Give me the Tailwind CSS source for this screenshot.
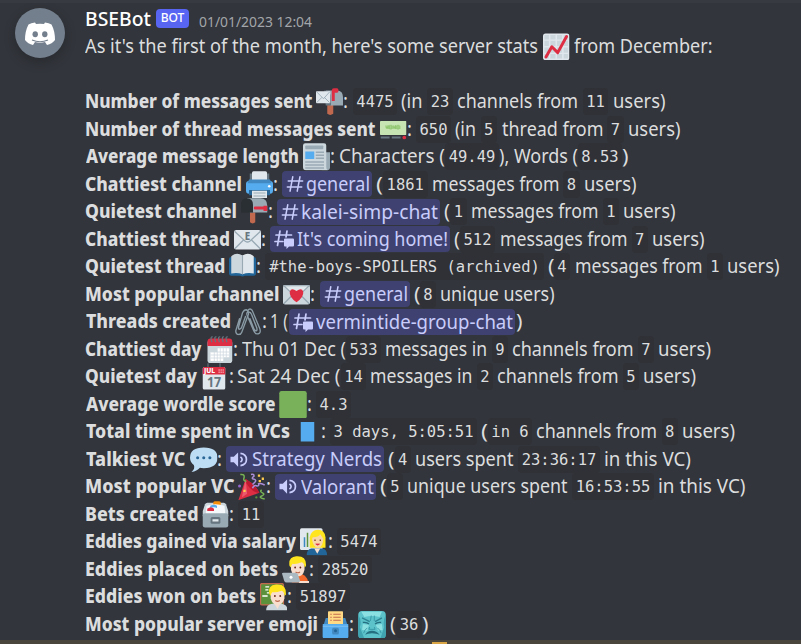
<!DOCTYPE html>
<html lang="en">
<head>
<meta charset="utf-8">
<title>BSEBot</title>
<script src="https://cdn.jsdelivr.net/npm/@tailwindcss/browser@4"></script>
</head>
<body class="bg-[#32353b]">
<svg class="hidden">
<symbol id="chart" viewBox="0 0 36 36"><rect width="36" height="36" rx="3.5" fill="#e1e8ed"/><path d="M2 2h6v6H2zM10 2h7v6h-7zM19 2h7v6h-7zM28 2h6v6h-6zM2 10h6v7H2zM10 10h7v7h-7zM19 10h7v7h-7zM28 10h6v7h-6zM2 19h6v7H2zM10 19h7v7h-7zM19 19h7v7h-7zM28 19h6v7h-6zM2 28h6v6H2zM10 28h7v6h-7zM19 28h7v6h-7zM28 28h6v6h-6z" fill="#ccd6dd"/><path d="M4 32l8-14 8 8L32 4" fill="none" stroke="#dd2e44" stroke-width="4" stroke-linecap="round" stroke-linejoin="round"/></symbol>
<symbol id="mailbox" viewBox="0 0 36 36"><path d="M15 22h8v12q-4 3-8 0z" fill="#c1694f"/><path d="M13 3h15q8 0 8 9v11H19z" fill="#99aab5"/><path d="M11 3q9 0 9 10v10h-7z" fill="#66757f"/><rect x="0" y="4" width="19" height="16" rx="1" fill="#e1e8ed"/><path d="M1 5l9 9 8-9M1 19l7-7M18 19l-7-7" fill="none" stroke="#99aab5" stroke-width="1.2"/><path d="M21 17V3q0-3 3-3h4q2 0 2 3t-2 3h-3v11z" fill="#dd2e44"/></symbol>
<symbol id="pager" viewBox="0 0 36 36"><rect y="6" width="36" height="19" rx="1" fill="#c6e5b3"/><path d="M8 12.500h20v4.500H8z" fill="#a6d388"/><path d="M8 12v3h3v-3v5M13 12h3v5h-3zM18 12v3h3v-3v5M23 12h3v5h-3z" fill="none" stroke="#8cc56c"/><path d="M1 27h12v3H1zM16 27h12v3H16z" fill="#66757f"/><circle cx="33" cy="28.500" r="2.500" fill="#dd2e44"/></symbol>
<symbol id="news" viewBox="0 0 36 36"><path d="M30 12h6v20q0 4-4 4h-7z" fill="#99aab5"/><path d="M0 3q0-3 3-3h25q3 0 3 3v28q0 5 3 5H4q-4 0-4-4z" fill="#ccd6dd"/><rect x="3" y="3" width="24" height="5" rx="1" fill="#99aab5"/><rect x="3" y="11" width="12" height="10" fill="#55acee"/><path d="M17 12h11M17 16h11M17 20h11M3 25h25M3 29h25M3 33h25" stroke="#99aab5" stroke-width="2"/></symbol>
<symbol id="printer" viewBox="0 0 36 36"><path d="M5 3h26v14H5z" fill="#66757f"/><path d="M8 2q0-2 2-2h16q2 0 2 2v14H8z" fill="#e1e8ed"/><rect y="13" width="36" height="17" rx="4" fill="#55acee"/><path d="M4 11h28l2 5H2z" fill="#4289c1"/><path d="M4 25h28v7H4z" fill="#2a6797"/><path d="M8 26h20v10H8z" fill="#e1e8ed"/><path d="M10 29h16M10 33h16" stroke="#99aab5" stroke-width="1.500"/><circle cx="31" cy="20" r="1.700" fill="#fff"/></symbol>
<symbol id="mailclosed" viewBox="0 0 36 36"><path d="M12 19h7v13q-3.500 3-7 0z" fill="#c1694f"/><path d="M8 0h18q9 0 9 10v9H12z" fill="#99aab5"/><path d="M0 19V9q0-9 8-9t8 9v10z" fill="#292f33"/><path d="M18 11h12v-1h4q1 0 1 1v6h-5v-2H18q-2-2 0-4z" fill="#dd2e44"/></symbol>
<symbol id="mail" viewBox="0 0 36 36"><rect y="5" width="36" height="26" rx="3" fill="#ccd6dd"/><path d="M1 30l13-13M35 30L22 17" stroke="#99aab5" stroke-width="1.800"/><path d="M1 6h34L20 20q-2 2-4 0z" fill="#e1e8ed" stroke="#99aab5" stroke-width="1.500"/></symbol>
<symbol id="maile" viewBox="0 0 36 36"><rect y="5" width="36" height="26" rx="3" fill="#e1e8ed"/><path d="M1 30l12-12M35 30L23 18M1 7l14 13q3 2 6 0L35 7" fill="none" stroke="#99aab5" stroke-width="1.800"/><text x="18" y="18" text-anchor="middle" font-family="Noto Sans" font-weight="800" font-size="13" fill="#66757f">E</text></symbol>
<symbol id="book" viewBox="0 0 36 36"><path d="M0 8q0-3 3-3h30q3 0 3 3v19q0 3-3 3H21q-3 2-6 0H3q-3 0-3-3z" fill="#226699"/><path d="M3 4q7-6 15-1v25q-7-3-15-1z" fill="#ccd6dd"/><path d="M33 4q-7-6-15-1v25q7-3 15-1z" fill="#e1e8ed"/><path d="M18 3v25" stroke="#99aab5" stroke-width="1.500"/></symbol>
<symbol id="love" viewBox="0 0 36 36"><use href="#mail"/><path d="M18 28Q8 21 9 14q2-6 9-1 7-5 9 1 1 7-9 14z" fill="#dd2e44"/></symbol>
<symbol id="clips" viewBox="0 0 36 36"><g fill="none" stroke="#8a9ba6" stroke-width="1.800" stroke-linecap="round"><path d="M6 14L1 30q0 5 4 5 3 0 4-3l9-24q0-5-3-6-3 0-5 4L5 24q-1 4 1 4t3-3l5-14"/><path d="M17 3q3-4 6 0l10 24q2 6-2 7-4 1-6-4L16 9q-1-4 2-4t4 3l7 18q1 4-1 4t-3-3l-5-13"/></g></symbol>
<symbol id="spiral" viewBox="0 0 36 36"><rect x="2" y="5" width="33" height="31" rx="4" fill="#ccd6dd"/><path d="M2 13V7q0-4 4-4h25q4 0 4 4v6z" fill="#dd2e44"/><path d="M15 16h16v12h-8v5H6V21h9z" fill="#fff"/><path d="M6 25h25M6 21h25M6 29h17M11 20v13M15 16v17M19 16v17M23 16v12M27 16v12" stroke="#ccd6dd"/><path d="M8 8q-3-8 1-7M13 8q-3-8 1-7M18 8q-3-8 1-7M23 8q-3-8 1-7M28 8q-3-8 1-7" fill="none" stroke="#66757f" stroke-width="1.600"/></symbol>
<symbol id="jul" viewBox="0 0 36 36"><path d="M8 0v8M24 0v8" stroke="#66757f" stroke-width="1.500"/><rect x="1" y="5" width="30" height="30" rx="2" fill="#e1e8ed"/><path d="M1 15V7q0-2 2-2h26q2 0 2 2v8z" fill="#dd2e44"/><text x="2.500" y="13.500" font-family="Noto Sans" font-weight="800" font-size="9" fill="#fff">JUL</text><path d="M22 9h8M22 12h8" stroke="#f5a0ab" stroke-width="1.700" stroke-dasharray="1.700 1"/><text x="16" y="32" text-anchor="middle" font-family="Noto Sans" font-weight="700" font-size="20" textLength="19" lengthAdjust="spacingAndGlyphs" fill="#66757f">17</text></symbol>
<symbol id="green" viewBox="0 0 36 36"><rect width="36" height="36" rx="3" fill="#78b159"/></symbol>
<symbol id="blue" viewBox="0 0 36 36"><path d="M9 5h18v26H9z" fill="#55acee"/></symbol>
<symbol id="speech" viewBox="0 0 36 36"><path d="M18 2q18 0 18 13.500T18 29q-3 0-5-.5Q9 33 2 34q5-4 3-9-5-4-5-9.500Q0 2 18 2z" fill="#bdddf4"/><circle cx="10" cy="15.500" r="2" fill="#2a6797"/><circle cx="18" cy="15.500" r="2" fill="#2a6797"/><circle cx="26" cy="15.500" r="2" fill="#2a6797"/></symbol>
<symbol id="party" viewBox="0 0 36 36"><path d="M10 8q14 8 18 18L2 35q-2 1-1-1z" fill="#dd2e44"/><path d="M10 8L5 32l7-5z" fill="#ea596e"/><path d="M10 8q14 8 18 18-7 0-13-7T10 8z" fill="#be1931"/><path d="M3 2q6-1 5 4-2 4 3 5" fill="none" stroke="#77b255" stroke-width="2"/><path d="M17 2q4-1 4 2-4 3-1 4 5 1 2 4l-3 3M19 20q2-5 6-3 3 0 2-3 4-1 8 2" fill="none" stroke="#aa8dd8" stroke-width="2"/><path d="M31 22q-3 2 1 4t-1 4 4 4" fill="none" stroke="#77b255" stroke-width="2"/><path d="M26 2h3v3h-3zM31 6h3v3h-3zM27 9h3v3h-3zM7 22h3v3H7z" fill="#ffcc4d"/><circle cx="2" cy="17" r="2" fill="#9266cc"/><circle cx="24" cy="32" r="1.500" fill="#5c913b"/></symbol>
<symbol id="filebox" viewBox="0 0 36 36"><path d="M1 20V13L4 4q1-2 3-2h22q2 0 3 2l3 9v7z" fill="#ccd6dd"/><path d="M15 2q0-2 2-2h6q2 0 2 2v3H15z" fill="#f4900c"/><path d="M6 6q12-4 24 0l1 11H5z" fill="#f5f8fa"/><path d="M11 6q5-3 9 0v3q-4-2-9 0z" fill="#55acee"/><path d="M7 10q5-4 9 0v3H7z" fill="#dd2e44"/><rect x="1" y="16" width="34" height="19" rx="3" fill="#99aab5"/><rect x="11.500" y="21" width="13" height="9" rx="2" fill="#66757f"/><path d="M14 24h8v3h-8z" fill="#e1e8ed"/></symbol>
<symbol id="face" viewBox="0 0 36 36"><path d="M14 10q0-9 9-9t9 9v8q-2 9-9 9t-9-9z" fill="#f7dece"/><circle cx="19.500" cy="15" r="1.200" fill="#662113"/><circle cx="26.500" cy="15" r="1.200" fill="#662113"/><path d="M20 21q3 2 6 0" fill="none" stroke="#c1694f" stroke-width="1.500"/></symbol>
<symbol id="office" viewBox="0 0 36 36"><rect width="30" height="29" rx="2" fill="#e1e8ed"/><path d="M6 12v13" stroke="#3b88c3" stroke-width="2"/><path d="M10 6v19" stroke="#5c913b" stroke-width="2"/><path d="M13 12Q15 2 24 2t10 10v14H13z" fill="#ffe51e"/><path d="M9 36q0-8 6-9h15q6 1 6 9z" fill="#226699"/><path d="M19 27h8l-4 7z" fill="#f7dece"/><path d="M17 12q8 0 10-4l4 6q0 11-7 12-7-1-8-12z" fill="#f7d7a8"/><path d="M20 15v2M27 15v2" stroke="#662113" stroke-width="1.500"/><path d="M21 21q3 3 5 0z" fill="#dd2e44" stroke="#dd2e44"/></symbol>
<symbol id="tech" viewBox="0 0 36 36"><path d="M13 32q1-9 8-9 12 0 14 12H13z" fill="#f4692b"/><use href="#face" x="-2"/><path d="M10 13Q8 1 19 0q14-1 13 13l-2 2q0-6-4-7-7 3-12 2-2 2-2 5z" fill="#ffe51e"/><path d="M0 23q0-1 2-1h16q2 0 3 2l4 11H6q-2 0-3-2z" fill="#aab8c2"/><circle cx="12" cy="28" r="2" fill="#fff"/><path d="M24 33h12v3H22z" fill="#f7dece"/></symbol>
<symbol id="teach" viewBox="0 0 36 36"><rect x=".7" y=".7" width="30" height="28" rx="2" fill="#5c913b" stroke="#c1694f" stroke-width="1.600"/><path d="M7 5h5M7 9h4M9 13h3M3 17h7" stroke="#fff" stroke-width="1.800"/><path d="M8 36q0-8 8-9h12q8 1 8 9z" fill="#ccd6dd"/><path d="M18 26h9l-4 8z" fill="#f7dece"/><use href="#face" x="0" y="2"/><path d="M12 14Q10 3 21 2q14-1 13 13l-2 2q0-6-4-7-7 3-12 2-2 2-2 5z" fill="#ffe51e"/></symbol>
<symbol id="ballot" viewBox="0 0 36 36"><path d="M5 9h26l4 13v12q0 2-2 2H3q-2 0-2-2V22z" fill="#4289c1"/><path d="M8 1q0-1 1-1h18q1 0 1 1v16H8z" fill="#ffd983"/><path d="M11 4h2M15 4h10M11 8h2M15 8h10M11 12h2M15 12h10" stroke="#c1694f" stroke-width="1.500"/><path d="M1 17h34v17q0 2-2 2H3q-2 0-2-2z" fill="#55acee"/><path d="M1 20h34" stroke="#8cc8f4"/><rect x="13.500" y="22" width="9" height="9" rx="2" fill="#4289c1"/><circle cx="18" cy="26" r="2" fill="#226699"/></symbol>
<symbol id="cyan" viewBox="0 0 36 36"><rect width="36" height="36" rx="5" fill="#5cc3cb"/><path d="M4 1h27l-3 7q-10-3-20 0zM6 17l8 1-2 8-7-1zM31 17l-8 1 3 8 6-1z" fill="#8be0e2"/><path d="M0 5q5 8 2 16l6 15H5q-5 0-5-5zM36 5q-4 8-2 16l-5 15h2q5 0 5-5z" fill="#3fa3b0"/><path d="M5 9l10 5M31 9l-9 5" stroke="#2d8594" stroke-width="1.800"/><path d="M6 15q5-1 8 2M30 15q-5-1-8 2" fill="none" stroke="#246f80" stroke-width="1.600"/><path d="M17 6l-1 7M21 6v7M15 21l-1 3h8l-1-3M12 22q-4 3-5 7M25 22q4 3 5 7" fill="none" stroke="#3797a5" stroke-width="1.200"/><path d="M9 31q3-5 9-5t10 5q-4-2-10-2t-9 2z" fill="#246f80"/></symbol>
<symbol id="i-hash" viewBox="0 0 20 20"><path d="M7.500 2L4.500 18M15.500 2L12.500 18M2.500 6.700h16M1.500 13.300h16" fill="none" stroke="#c9cdfb" stroke-width="1.700" stroke-linecap="round"/></symbol>
<symbol id="i-thread" viewBox="0 0 20 20"><path d="M6 2L3.500 16.500M13 2l-1 6M2 6h15.500M1 12.500h8" fill="none" stroke="#c9cdfb" stroke-width="1.700" stroke-linecap="round"/><path d="M11 9.500h8q1 0 1 1v6q0 1-1 1h-4L12.500 20v-2.500H11q-1 0-1-1v-6q0-1 1-1z" fill="#c9cdfb"/></symbol>
<symbol id="i-voice" viewBox="0 0 20 20"><path d="M8.500 2.500v15L4 13H.5V7H4z" fill="#c9cdfb"/><path d="M11 7.300q3.500 2.700 0 5.400M11 3.600q6.300.9 6.300 6.400T11 16.400" fill="none" stroke="#c9cdfb" stroke-width="1.800"/></symbol>
</svg>
<main class="relative flex h-[644px] w-[801px] flex-col overflow-hidden bg-[#32353b] font-['Noto_Sans',sans-serif] text-[#dcddde]">
  <div class="h-[3px] shrink-0 bg-[#373a41]"></div>
  <div class="flex h-[637px] shrink-0 overflow-hidden">
    <div class="w-[85px] shrink-0 pl-[15px] pt-[5px]">
      <div class="flex size-[50px] items-center justify-center rounded-full bg-[#747f8d] shadow-[0_4px_12px_rgba(0,0,0,.22)]">
        <svg class="h-[23px] w-[30px]" viewBox="0 0 30 23"><path d="M10 .5Q6 1 3.500 2.500 0 9 0 18q3 4 8 5l2-3q5 1.500 10 0l2 3q5-1 8-5 0-9-3.500-15.500Q24 1 20 .5L19 2q-4-.7-8 0z" fill="#fff"/><ellipse cx="10.200" cy="12.200" rx="2.700" ry="3" fill="#747f8d"/><ellipse cx="19.800" cy="12.200" rx="2.700" ry="3" fill="#747f8d"/><path d="M7 18q8 3.500 16 0" fill="none" stroke="#747f8d" stroke-width="1.200"/></svg>
      </div>
    </div>
    <div class="flex w-[716px] flex-col">
      <div class="flex h-[30px] shrink-0 items-center" id="head"></div>
      <div class="flex flex-col" id="body"></div>
    </div>
  </div>
  <div class="flex h-[4px] shrink-0 bg-[#49443c] pl-[432px]"><div class="mt-[2px] h-[2px] w-[15px] bg-[#d9a545]"></div></div>
</main>
<script>
// Each piece of a line: [kind, content, left edge, right edge]
const head = [
  ["name","BSEBot",84.5,150.5],["bot","BOT",156,189],["time","01/01/2023 12:04",199,312]
];
const lines = [
  [["t","As it's the first of the month, here's some server stats",85,538],["e","chart",543,569.5],["t","from December:",574,712.5]],
  [],
  [["b","Number of messages sent",84.5,312],["e","mailbox",316,343],["t",":",343,348],["c","4475",353,397],["t","(in",401,422.5],["c","23",427,453],["t","channels from",457,578],["c","11",583,608],["t","users)",612.5,665]],
  [["b","Number of thread messages sent",84.5,375],["e","pager",380,406.5],["t",":",406.5,411.5],["c","650",416,451],["t","(in",455,476],["c","5",480.5,497],["t","thread from",501.5,603],["c","7",607,624],["t","users)",627.5,680]],
  [["b","Average message length",85.5,298.5],["e","news",303,330],["t",":",330,335],["t","Characters (",339,445],["c","49.49",445,499],["t","), Words (",499,578],["c","8.53",578,622],["t",")",622,628.5]],
  [["b","Chattiest channel",84.5,241.5],["e","printer",245.5,272.5],["t",":",273,278],["hash","general",282,372],["t","(",376,383],["c","1861",383,427.5],["t","messages from",431.5,559],["c","8",563,580],["t","users)",583.5,636]],
  [["b","Quietest channel",84.5,236.5],["e","mailclosed",241,268],["t",":",268,273],["hash","kalei-simp-chat",277,440],["t","(",444,450],["c","1",450,467],["t","messages from",470.5,598],["c","1",603,619],["t","users)",623,675.5]],
  [["b","Chattiest thread",84.5,229.5],["e","maile",234,261],["t",":",261,266],["thread","It's coming home!",270,450],["t","(",454,460],["c","512",460,495],["t","messages from",499.5,627],["c","7",631.5,648],["t","users)",652,704.5]],
  [["b","Quietest thread",84.5,225],["e","book",229,256],["t",":",256,261],["c","#the-boys-SPOILERS (archived)",265,544],["t","(",547.5,554],["c","4",554,570],["t","messages from",574.5,702],["c","1",707,723],["t","users)",727,779.5]],
  [["b","Most popular channel",84.5,279],["e","love",283,310],["t",":",310,315],["hash","general",320,410],["t","(",413.5,420],["c","8",420,436],["t","unique users)",440,554.5]],
  [["b","Threads created",85.5,230.5],["e","clips",234.5,261.5],["t",":",261.5,266.5],["t","1 (",270,288],["thread","vermintide-group-chat",289,515],["t",")",515.5,522]],
  [["b","Chattiest day",84.5,201],["e","spiral",206,233],["t",":",233,238],["t","Thu 01 Dec (",242,346],["c","533",346,381],["t","messages in",385,487],["c","9",492,508],["t","channels from",512,633.5],["c","7",638,654],["t","users)",658,711]],
  [["b","Quietest day",84.5,196.5],["e","jul",202,229],["t",":",228.5,233.5],["t","Sat 24 Dec (",237,340.5],["c","14",341,366],["t","messages in",370,472.5],["c","2",477,493],["t","channels from",497,618.5],["c","5",623,639],["t","users)",643,696]],
  [["b","Average wordle score",85.5,275],["e","green",279,307],["t",":",307,312],["c","4.3",316,351]],
  [["b","Total time spent in VCs",85.5,289.5],["e","blue",293.5,320.5],["t",":",321,326],["c","3 days, 5:05:51",330,477],["t","(",481,488],["c","in 6",488,532],["t","channels from",536,657],["c","8",661.5,678],["t","users)",682,735]],
  [["b","Talkiest VC",85.5,185],["e","speech",190,217.5],["t",":",217,222],["voice","Strategy Nerds",226,384],["t","(",388,394.5],["c","4",394.5,411],["t","users spent",415,513.5],["c","23:36:17",518,600],["t","in this VC)",604,691]],
  [["b","Most popular VC",84.5,234],["e","party",238,265.5],["t",":",266,271],["voice","Valorant",275,376],["t","(",380,387],["c","5",387,403],["t","unique users spent",407,567.5],["c","16:53:55",572,654],["t","in this VC)",658,745.5]],
  [["b","Bets created",84.5,198],["e","filebox",202,229],["t",":",229,234],["c","11",238,264]],
  [["b","Eddies gained via salary",84.5,295.5],["e","office",300,327],["t",":",327.5,332.5],["c","5474",337,381]],
  [["b","Eddies placed on bets",84.5,277.5],["e","tech",282,309],["t",":",309,314],["c","28520",318,372]],
  [["b","Eddies won on bets",84.5,255.5],["e","teach",259.5,287],["t",":",287,292],["c","51897",296,350]],
  [["b","Most popular server emoji",84.5,317.5],["e","ballot",322,349],["t",":",349,354],["e","cyan",358,386],["t","(",390,396],["c","36",396,422],["t",")",422,428.5]]
];
const styles = {
  t: "shrink-0 whitespace-pre text-[19px] leading-[27px]",
  b: "shrink-0 whitespace-pre text-[19px] leading-[27px] font-extrabold",
  name: "shrink-0 whitespace-pre text-[19px] leading-[24px] font-medium text-white pt-[2px]",
  time: "shrink-0 whitespace-pre text-[14.5px] leading-[20px] text-[#a3a6aa] pt-[5px]",
  bot: "flex h-[19px] shrink-0 items-center justify-center rounded-[4px] bg-[#5865f2] text-[12px] font-medium text-white",
  c: "flex h-[27px] shrink-0 items-center justify-center rounded-[4px] bg-[#2f3136] pt-[2px] font-['DejaVu_Sans_Mono',monospace] text-[15.5px] whitespace-pre",
  m: "flex h-[26px] shrink-0 items-center rounded-[4px] bg-[#3f4270] pl-[4px] text-[19px] text-[#c9cdfb] whitespace-pre"
};
// The face each kind is measured in
const faces = { t: "400 19px", b: "800 19px", name: "500 19px", time: "400 14.5px", m: "400 19px" };
const lead = { hash: 24, thread: 27, voice: 26 };
const iconSize = { hash: 18, thread: 20, voice: 19 };
const iconClass = { hash: "size-[18px] shrink-0", thread: "size-[20px] shrink-0", voice: "size-[19px] shrink-0" };
const pen = document.createElement("canvas").getContext("2d");
function svg(id, cls) {
  const box = document.createElement("div");
  box.innerHTML = '<svg class="' + cls + '"><use href="#' + id + '"/></svg>';
  return box.firstChild;
}
function label(text, width, kind, parent) {
  const s = document.createElement("span");
  s.className = "inline-block shrink-0 origin-left";
  s.textContent = text;
  pen.font = (faces[kind] || faces.m) + " 'Noto Sans'";
  s.style.transform = "scaleX(" + (width / pen.measureText(text).width).toFixed(4) + ")";
  parent.append(s);
  return s;
}
function fill(row, pieces) {
  let x = 85;
  for (const [kind, text, left, right] of pieces) {
    const width = right - left;
    let el;
    if (kind === "e") el = svg(text, "h-[27.5px] shrink-0");
    else {
      el = document.createElement("div");
      el.className = styles[kind] || styles.m;
      if (kind === "c" || kind === "bot") el.textContent = text;
      else if (lead[kind]) {
        el.append(svg("i-" + kind, iconClass[kind]));
        const s = label(text, width - lead[kind] - 2, kind, el);
        s.style.marginLeft = lead[kind] - 4 - iconSize[kind] + "px";
      } else label(text, width, kind, el);
    }
    el.style.width = width + "px";
    el.style.marginLeft = left - x + "px";
    x = right;
    row.append(el);
  }
}
fill(document.getElementById("head"), head);
for (const pieces of lines) {
  const row = document.createElement("div");
  row.className = "flex h-[27.5px] shrink-0 items-center";
  fill(row, pieces);
  document.getElementById("body").append(row);
}
</script>
</body>
</html>
